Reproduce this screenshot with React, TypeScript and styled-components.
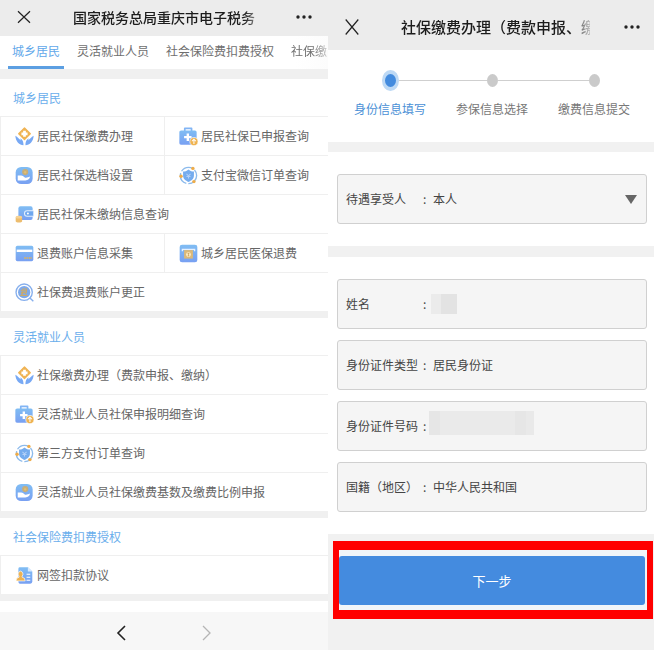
import React from "react";
import styled, { createGlobalStyle } from "styled-components";

const GlobalStyle = createGlobalStyle`
  *, *::before, *::after { box-sizing: border-box; }
  body {
    margin: 0;
    background: #fff;
    font-family: "Noto Sans CJK SC", "Liberation Sans", sans-serif;
    font-size: 12px;
    line-height: 18px;
    color: #666;
  }
  h1, h2, ul, ol { margin: 0; padding: 0; list-style: none; }
  button, input, select { font: inherit; color: inherit; }
  a { color: inherit; text-decoration: none; }
`;

const Page = styled.div`
  display: grid;
  grid-template-columns: 328fr 326fr;
  min-height: 100vh;
`;

const Screen = styled.div<{ $bg: string }>`
  display: flex;
  flex-direction: column;
  min-width: 0;
  background: ${(p) => p.$bg};
`;

const TitleBar = styled.header<{ $tall?: boolean }>`
  display: flex;
  align-items: center;
  height: ${(p) => (p.$tall ? 50 : 36)}px;
  padding: ${(p) => (p.$tall ? "3px 11px 0 13px" : "0 13px 3px")};
  background: #ececec;
`;

const IconButton = styled.button`
  display: flex;
  flex: none;
  align-items: center;
  justify-content: center;
  width: 22px;
  height: 22px;
  padding: 0;
  border: 0;
  background: none;
  cursor: pointer;
`;

const Title = styled.h1<{ $large?: boolean }>`
  flex: 1;
  margin: ${(p) => (p.$large ? "0 31px 0 38px" : "0 30px 0 38px")};
  overflow: hidden;
  white-space: nowrap;
  font-size: ${(p) => (p.$large ? 15 : 14)}px;
  line-height: 22px;
  font-weight: 500;
  color: #1c1c1c;
  mask-image: linear-gradient(to right, #000 90%, rgba(0, 0, 0, 0.2));
`;

const Tabs = styled.nav`
  display: flex;
  gap: 9px;
  height: 33px;
  padding-left: 8px;
  overflow: hidden;
  background: linear-gradient(to right, #fff 90%, #fcfcfc);
`;

const Tab = styled.a<{ $active?: boolean; $fading?: boolean }>`
  flex: none;
  padding: 6px 4px 0;
  border-bottom: 3px solid ${(p) => (p.$active ? "#5c9fe2" : "transparent")};
  color: ${(p) => (p.$active ? "#62a8ea" : "#6e6e6e")};
  mask-image: ${(p) => (p.$fading ? "linear-gradient(to right, #000 55%, rgba(0, 0, 0, 0.2))" : "none")};
`;

const Sections = styled.main`
  flex: 1;
  display: flex;
  flex-direction: column;
  gap: 7px;
  padding-top: 10px;
`;

const SectionBox = styled.section`
  background: #fff;
`;

const SectionTitle = styled.h2`
  height: 37px;
  padding: 10px 13px 9px;
  font-size: 12px;
  line-height: 18px;
  font-weight: 400;
  color: #6aaeec;
`;

const ServiceGrid = styled.ul`
  display: grid;
  grid-template-columns: 1fr 1fr;
`;

const ServiceCell = styled.li<{ $wide?: boolean }>`
  grid-column: ${(p) => (p.$wide ? "1 / -1" : "auto")};
  border: solid #efefef;
  border-width: 1px 0 0 1px;
`;

const ServiceLink = styled.a`
  display: flex;
  align-items: center;
  gap: 3px;
  height: 38px;
  padding-left: 14px;
  white-space: nowrap;

  svg { flex: none; }
`;

const Remainder = styled.div`
  flex: 1;
  background: #fff;
`;

const BottomNav = styled.footer`
  display: flex;
  align-items: center;
  justify-content: center;
  gap: 64px;
  height: 38px;
  padding-top: 4px;
  background: #f7f7f7;
`;

const Steps = styled.ol`
  display: grid;
  grid-template-columns: repeat(3, 1fr);
  height: 92px;
  padding: 20px 9px 0 11px;
  background: #fff;
`;

const Step = styled.li<{ $active?: boolean }>`
  display: flex;
  flex-direction: column;
  align-items: center;
  gap: 9px;
  color: ${(p) => (p.$active ? "#4a90d6" : "#777")};
`;

const Track = styled.div`
  display: flex;
  align-items: center;
  align-self: stretch;
  height: 21px;
`;

const Rail = styled.span<{ $hidden?: boolean }>`
  flex: 1;
  height: 1px;
  background: ${(p) => (p.$hidden ? "transparent" : "#cfcfcf")};
`;

const Dot = styled.span<{ $active?: boolean }>`
  width: ${(p) => (p.$active ? 17 : 11)}px;
  height: ${(p) => (p.$active ? 21 : 13)}px;
  border: ${(p) => (p.$active ? "solid #bdd9f5" : "0")};
  border-width: ${(p) => (p.$active ? "4px 3px" : "0")};
  border-radius: 50%;
  background: ${(p) => (p.$active ? "#438bde" : "#cacaca")};
`;

const Form = styled.form`
  flex: 1;
  display: flex;
  flex-direction: column;
  padding-top: 10px;
`;

const FieldGroups = styled.div`
  display: flex;
  flex-direction: column;
  gap: 11px;
`;

const FieldGroup = styled.div`
  display: flex;
  flex-direction: column;
  gap: 11px;
  padding: 22px 7px 22px 9px;
  background: #fff;
`;

const Field = styled.label`
  display: flex;
  align-items: center;
  height: 50px;
  padding: 0 9px 0 8px;
  border: 1px solid #d0d0d0;
  border-radius: 3px;
  background: #f5f5f5;
  color: #444;

  > svg { flex: none; }
`;

const FieldName = styled.span`
  flex: none;
  width: 72px;
  white-space: nowrap;
`;

const Colon = styled.span`
  flex: none;
  width: 15px;
  padding-left: 5px;
`;

const TextInput = styled.input`
  flex: 1;
  min-width: 0;
  padding: 0;
  border: 0;
  outline: 0;
  background: none;
`;

const Picker = styled.select`
  flex: 1;
  min-width: 0;
  padding: 0;
  border: 0;
  outline: 0;
  appearance: none;
  background: none;
`;

const NameMask = styled.span`
  width: 26px;
  height: 20px;
  margin-left: -2px;
  background: linear-gradient(to right, #ebebeb 38%, #e3e3e3 38%);
`;

const NumberMask = styled.span`
  width: 105px;
  height: 24px;
  margin: 0 0 6px -4px;
  background: linear-gradient(to right, #e6e6e6 10%, #eaeaea 10% 82%, #e6e6e6 82% 92%, #e9e9e9 92%);
`;

const Highlight = styled.div`
  margin: 7px 1px 0 5px;
  padding: 6px 2px 5px 0;
  border: solid #f00;
  border-width: 9px 6px;
  background: #f1f5f9;
`;

const SubmitButton = styled.button`
  display: block;
  width: 100%;
  height: 49px;
  border: 0;
  border-radius: 3px;
  background: #448bdf;
  color: #fff;
  font-size: 13px;
  cursor: pointer;
`;

const CloseIcon = ({ tall }: { tall?: boolean }) => (
  <svg width="14" height="18" viewBox="0 0 14 18" fill="none" stroke="#222" strokeWidth="1.2">
    <path d={tall ? "M.7 1.500 13.300 16.500M13.300 1.500 .7 16.500" : "M1 3.200 13 14.800M13 3.200 1 14.800"} />
  </svg>
);

const MoreIcon = () => (
  <svg width="18" height="6" viewBox="0 0 18 6" fill="#222">
    <circle cx="3" cy="3" r="1.700" />
    <circle cx="9" cy="3" r="1.700" />
    <circle cx="15" cy="3" r="1.700" />
  </svg>
);

type IconName = "hands" | "kit" | "coin" | "shield" | "wallet" | "card" | "refund" | "search" | "document";

const drawings: Record<IconName, React.ReactNode> = {
  hands: (
    <>
      <path d="M28 3 45 20 28 37 11 20Z" fill="#efb353" stroke="#efb353" strokeWidth="4" strokeLinejoin="round" />
      <path d="M28 11V29M19 20H37" stroke="#fff" strokeWidth="8" />
      <path d="M1 26C8 29 11 36 18 40L15 34C21 36 26 44 25 54C13 54 2 43 1 26Z" fill="#78a9f4" />
      <path d="M55 26C48 29 45 36 38 40L41 34C35 36 30 44 31 54C43 54 54 43 55 26Z" fill="#78a9f4" />
    </>
  ),
  kit: (
    <>
      <path d="M17 12V4H37V12" fill="none" stroke="#82b5f5" strokeWidth="5" strokeLinejoin="round" />
      <rect x="1" y="10" width="51" height="42" rx="5" fill="url(#blue)" />
      <path d="M26 19V41M15 30H37" stroke="#fff" strokeWidth="7" />
      <circle cx="44" cy="43" r="12" fill="#efb350" stroke="#fff" strokeWidth="2" />
      <path d="M44 50V38M38 42 44 36 50 42" fill="none" stroke="#fff" strokeWidth="3" />
    </>
  ),
  coin: (
    <>
      <rect x="2" y="3" width="50" height="50" rx="16" fill="url(#blue)" />
      <circle cx="30" cy="18" r="9" fill="#c8ad77" />
      <path d="M27 14 30 18 33 14M30 18V24M26 19H34" fill="none" stroke="#e6c573" strokeWidth="2" />
      <path d="M8 28H16C22 27 24 30 29 34C34 36 38 33 44 31C44 39 36 43 27 43H8Z" fill="#fff" />
    </>
  ),
  shield: (
    <>
      <circle cx="28" cy="28" r="24" fill="none" stroke="#8dbbec" strokeWidth="4" strokeDasharray="38 6" />
      <path d="M28 10C34 15 38 16 44 16V28C44 38 37 43 28 47C19 43 12 38 12 28V16C18 16 22 15 28 10Z" fill="#75acee" />
      <path d="M22 23 28 29 34 23M28 29V37M22 31H34" fill="none" stroke="#b3d0f7" strokeWidth="3" />
      <circle cx="41" cy="7" r="5" fill="#efac48" />
      <circle cx="6" cy="30" r="5" fill="#efac48" />
      <circle cx="44" cy="46" r="5" fill="#efac48" />
    </>
  ),
  wallet: (
    <>
      <rect x="10" y="4" width="42" height="40" rx="6" fill="url(#blue)" />
      <path d="M54 17H36A8 8 0 0 0 36 33H54" fill="#6fa7ee" stroke="#e2efff" strokeWidth="3" />
      <circle cx="38" cy="25" r="3" fill="#fff" />
      <path d="M2 36V48C2 53 21 53 21 48V36Z" fill="#edbd6e" />
      <ellipse cx="11.500" cy="36" rx="9.500" ry="4" fill="#f5d294" />
    </>
  ),
  card: (
    <>
      <rect x="2" y="5" width="52" height="46" rx="5" fill="url(#blue)" />
      <path d="M5 20H51" stroke="#fff" strokeWidth="7" />
      <path d="M27 41H50" stroke="#c9b27c" strokeWidth="6" strokeDasharray="5 2" />
    </>
  ),
  refund: (
    <>
      <rect x="2" y="2" width="52" height="52" rx="7" fill="url(#blue)" />
      <path d="M10 21V16H46V21" fill="none" stroke="#e5f1ff" strokeWidth="4" />
      <rect x="15" y="18" width="26" height="25" fill="#dcb978" />
      <circle cx="28" cy="31" r="7" fill="#fff2ce" />
      <path d="M25 28H31M25 33H31M28 26V37" stroke="#c99f57" strokeWidth="2" />
    </>
  ),
  search: (
    <>
      <circle cx="27" cy="27" r="24" fill="#fff" stroke="#86afed" strokeWidth="4" />
      <circle cx="27" cy="27" r="18" fill="#7da9eb" />
      <path d="M44 44 54 54" stroke="#86afed" strokeWidth="4" />
      <path d="M23 18H34V27H23ZM23 23H34M23 18V34M28 28 34 34M17 20 20 23M17 27H20V34L17 37H37" fill="none" stroke="#cbaa68" strokeWidth="3" />
    </>
  ),
  document: (
    <>
      <path d="M13 4H38L51 16V46Q51 52 45 52H14Q10 52 10 46V9Q10 4 13 4Z" fill="url(#blue)" />
      <path d="M38 4V16H51Z" fill="#d7eaff" />
      <path d="M34 24H45M34 33H45M34 42H45" stroke="#fff" strokeWidth="3" />
      <path d="M16 15A9 9 0 0 1 21 30V33Q30 34 30 44H3Q3 34 12 33V30A9 9 0 0 1 16 15Z" fill="#edb252" stroke="#fff" strokeWidth="2" />
    </>
  ),
};

const ServiceIcon = ({ name }: { name: IconName }) => (
  <svg width="19" height="19" viewBox="0 0 56 56" aria-hidden="true">
    <defs>
      <linearGradient id="blue" x1="0" y1="0" x2="0" y2="1">
        <stop offset="0" stopColor="#80bdf3" />
        <stop offset="1" stopColor="#78a0f2" />
      </linearGradient>
    </defs>
    {drawings[name]}
  </svg>
);

type Service = { icon: IconName; label: string; wide?: boolean };

const sections: { title: string; services: Service[] }[] = [
  {
    title: "城乡居民",
    services: [
      { icon: "hands", label: "居民社保缴费办理" },
      { icon: "kit", label: "居民社保已申报查询" },
      { icon: "coin", label: "居民社保选档设置" },
      { icon: "shield", label: "支付宝微信订单查询" },
      { icon: "wallet", label: "居民社保未缴纳信息查询", wide: true },
      { icon: "card", label: "退费账户信息采集" },
      { icon: "refund", label: "城乡居民医保退费" },
      { icon: "search", label: "社保费退费账户更正", wide: true },
    ],
  },
  {
    title: "灵活就业人员",
    services: [
      { icon: "hands", label: "社保缴费办理（费款申报、缴纳）", wide: true },
      { icon: "kit", label: "灵活就业人员社保申报明细查询", wide: true },
      { icon: "shield", label: "第三方支付订单查询", wide: true },
      { icon: "coin", label: "灵活就业人员社保缴费基数及缴费比例申报", wide: true },
    ],
  },
  {
    title: "社会保险费扣费授权",
    services: [{ icon: "document", label: "网签扣款协议", wide: true }],
  },
];

const tabs = ["城乡居民", "灵活就业人员", "社会保险费扣费授权", "社保缴"];
const steps = ["身份信息填写", "参保信息选择", "缴费信息提交"];

export default function App() {
  return (
    <>
      <GlobalStyle />
      <Page>
        <Screen $bg="#f0f0f0">
          <TitleBar>
            <IconButton aria-label="关闭"><CloseIcon /></IconButton>
            <Title>国家税务总局重庆市电子税务</Title>
            <IconButton aria-label="更多"><MoreIcon /></IconButton>
          </TitleBar>
          <Tabs>
            {tabs.map((tab, i) => (
              <Tab key={tab} href="#" $active={i === 0} $fading={i === tabs.length - 1}>{tab}</Tab>
            ))}
          </Tabs>
          <Sections>
            {sections.map((section) => (
              <SectionBox key={section.title}>
                <SectionTitle>{section.title}</SectionTitle>
                <ServiceGrid>
                  {section.services.map((service) => (
                    <ServiceCell key={service.label} $wide={service.wide}>
                      <ServiceLink href="#">
                        <ServiceIcon name={service.icon} />
                        {service.label}
                      </ServiceLink>
                    </ServiceCell>
                  ))}
                </ServiceGrid>
              </SectionBox>
            ))}
            <Remainder />
          </Sections>
          <BottomNav>
            <IconButton aria-label="后退">
              <svg width="10" height="16" viewBox="0 0 10 16" fill="none" stroke="#222" strokeWidth="1.6">
                <path d="M9 1 2 8l7 7" />
              </svg>
            </IconButton>
            <IconButton aria-label="前进">
              <svg width="10" height="16" viewBox="0 0 10 16" fill="none" stroke="#b5b5b5" strokeWidth="1.3">
                <path d="m1 1 7 7-7 7" />
              </svg>
            </IconButton>
          </BottomNav>
        </Screen>

        <Screen $bg="#f1f1f1">
          <TitleBar $tall>
            <IconButton aria-label="关闭"><CloseIcon tall /></IconButton>
            <Title $large>社保缴费办理（费款申报、缴</Title>
            <IconButton aria-label="更多"><MoreIcon /></IconButton>
          </TitleBar>
          <Steps>
            {steps.map((step, i) => (
              <Step key={step} $active={i === 0}>
                <Track>
                  <Rail $hidden={i === 0} />
                  <Dot $active={i === 0} />
                  <Rail $hidden={i === steps.length - 1} />
                </Track>
                {step}
              </Step>
            ))}
          </Steps>
          <Form onSubmit={(e) => e.preventDefault()}>
            <FieldGroups>
              <FieldGroup>
                <Field>
                  <FieldName>待遇享受人</FieldName>
                  <Colon>:</Colon>
                  <Picker defaultValue="本人">
                    <option>本人</option>
                  </Picker>
                  <svg width="12" height="9" viewBox="0 0 12 9" fill="#666">
                    <path d="M0 0H12L6 9Z" />
                  </svg>
                </Field>
              </FieldGroup>
              <FieldGroup>
                <Field as="div">
                  <FieldName>姓名</FieldName>
                  <Colon>:</Colon>
                  <NameMask />
                </Field>
                <Field>
                  <FieldName>身份证件类型</FieldName>
                  <Colon>:</Colon>
                  <TextInput defaultValue="居民身份证" />
                </Field>
                <Field as="div">
                  <FieldName>身份证件号码</FieldName>
                  <Colon>:</Colon>
                  <NumberMask />
                </Field>
                <Field>
                  <FieldName>国籍（地区）</FieldName>
                  <Colon>:</Colon>
                  <TextInput defaultValue="中华人民共和国" />
                </Field>
              </FieldGroup>
            </FieldGroups>
            <Highlight>
              <SubmitButton type="submit">下一步</SubmitButton>
            </Highlight>
          </Form>
        </Screen>
      </Page>
    </>
  );
}
